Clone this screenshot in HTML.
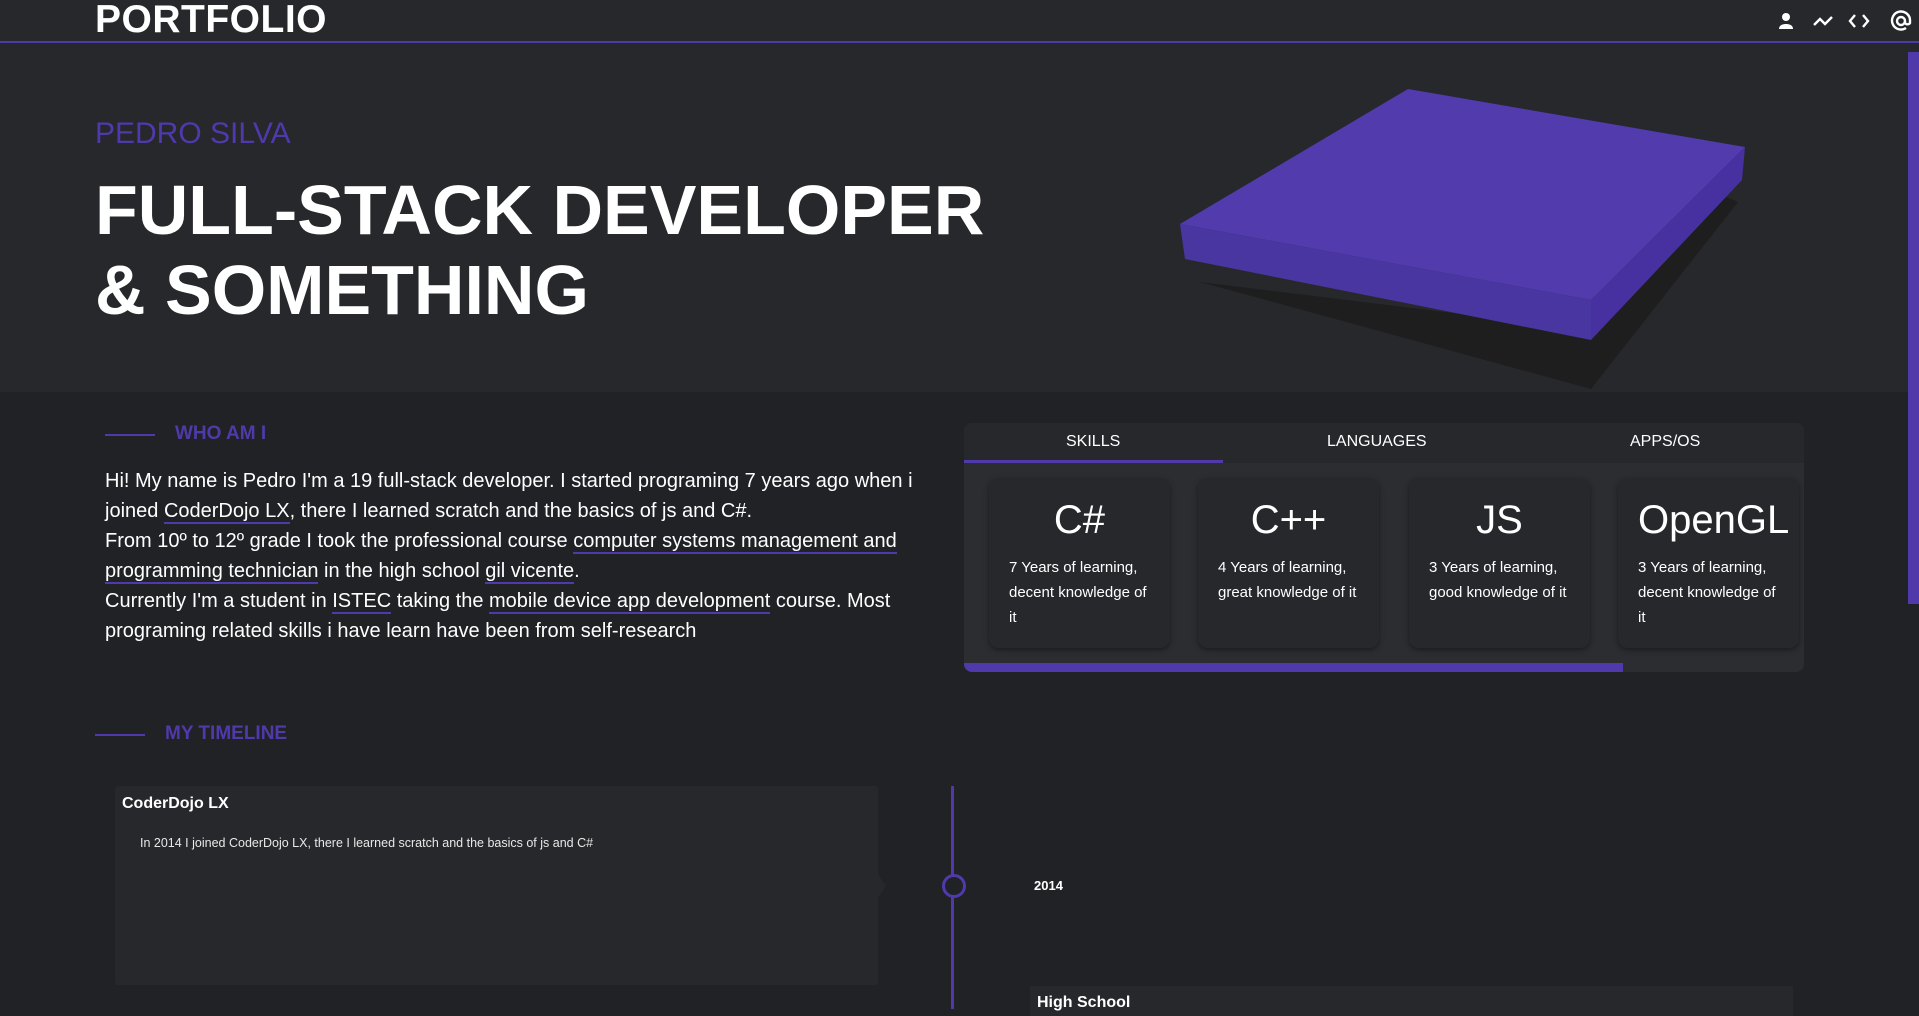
<!DOCTYPE html>
<html><head><meta charset="utf-8"><style>
*{margin:0;padding:0;box-sizing:border-box}
body{width:1919px;height:1009px;overflow:hidden;background:#212226;font-family:"Liberation Sans",sans-serif;color:#fff;position:relative}
.abs{position:absolute}
header{position:absolute;left:0;top:0;width:1919px;height:43px;background:#27282c;border-bottom:2px solid #5039ab}
.logo{left:95px;top:-2px;font-size:39px;font-weight:bold;letter-spacing:.5px}
.hero{left:0;top:43px;width:1919px;height:349px;background:#27282c}
.sub{left:95px;top:117px;font-size:30px;color:#5039ab}
.h1{left:95px;top:170px;font-size:70px;font-weight:bold;line-height:80px}
.sec{font-size:19px;font-weight:bold;color:#5039ab}
.sec:before{content:"";position:absolute;left:-70px;top:11px;width:50px;height:2px;background:#5039ab}
.para{left:105px;top:466px;width:830px;font-size:20px;line-height:30px}
.para u{text-decoration:none;border-bottom:2px solid #5039ab}
.tabs{left:964px;top:423px;width:840px;height:249px;background:#2c2d31;border-radius:8px;overflow:hidden}
.tabh{height:40px;background:#27282c;position:relative;font-size:16px}
.tabh span{position:absolute;top:10px}
.card{position:absolute;top:55px;width:181px;height:170px;background:#27282c;border-radius:10px;box-shadow:0 2px 6px rgba(0,0,0,.4);padding:0 20px}
.card h3{font-weight:normal;font-size:40px;text-align:center;margin-top:20px;white-space:nowrap}
.card p{font-size:15px;line-height:25px;margin-top:12px}
.tl{left:115px;top:786px;width:763px;height:199px;background:#27282c;border-radius:3px}
</style></head><body>
<header><div class="abs logo">PORTFOLIO</div>
<svg class="abs" style="left:1774px;top:8px" width="140" height="26" viewBox="0 0 140 26">
<g fill="#fff"><circle cx="12" cy="9" r="4"/><path d="M5 21c0-4 4-5 7-5s7 1 7 5z"/></g>
<g fill="none" stroke="#fff" stroke-width="2.4"><path d="M40 17l6-6 5 5 7-7"/><path d="M81 7l-5 6 5 6M89 7l5 6-5 6"/><circle cx="127" cy="13" r="4"/><path d="M131 13v2a3 3 0 0 0 5 0v-2a9 9 0 1 0-4 7"/></g></svg>
</header>
<div class="abs hero"></div>
<div class="abs sub">PEDRO SILVA</div>
<div class="abs h1">FULL-STACK DEVELOPER<br>&amp; SOMETHING</div>
<svg class="abs" style="left:1150px;top:70px" width="620" height="322" viewBox="0 0 620 322">
<path d="M50 212L441 319 588 132 560 120 441 260z" fill="#1e1e1f"/>
<path d="M30 154L258 19 595 77 441 230z" fill="#513bad"/>
<path d="M30 154L441 230 441 270 35 189z" fill="#4a36a0"/>
<path d="M441 230L595 77 592 110 441 270z" fill="#4731a0"/>
</svg>
<div class="abs" style="left:1908px;top:52px;width:11px;height:552px;background:#5039ab"></div>
<div class="abs sec" style="left:175px;top:423px">WHO AM I</div>
<div class="abs para">Hi! My name is Pedro I'm a 19 full-stack developer. I started programing 7 years ago when i joined <u>CoderDojo LX</u>, there I learned scratch and the basics of js and C#.<br>From 10º to 12º grade I took the professional course <u>computer systems management and programming technician</u> in the high school <u>gil vicente</u>.<br>Currently I'm a student in <u>ISTEC</u> taking the <u>mobile device app development</u> course. Most programing related skills i have learn have been from self-research</div>
<div class="abs tabs">
<div class="tabh"><span style="left:102px">SKILLS</span><span style="left:363px">LANGUAGES</span><span style="left:666px">APPS/OS</span>
<div class="abs" style="left:0;top:37px;width:259px;height:3px;background:#5039ab"></div></div>
<div class="card" style="left:25px"><h3>C#</h3><p>7 Years of learning, decent knowledge of it</p></div>
<div class="card" style="left:234px"><h3>C++</h3><p>4 Years of learning, great knowledge of it</p></div>
<div class="card" style="left:445px"><h3>JS</h3><p>3 Years of learning, good knowledge of it</p></div>
<div class="card" style="left:654px"><h3>OpenGL</h3><p>3 Years of learning, decent knowledge of it</p></div>
<div class="abs" style="left:0;top:240px;width:659px;height:9px;background:#5039ab"></div>
</div>
<div class="abs sec" style="left:165px;top:723px">MY TIMELINE</div>
<div class="abs tl"><div class="abs" style="left:7px;top:9px;font-size:16px;font-weight:bold">CoderDojo LX</div>
<div class="abs" style="left:25px;top:50px;font-size:12.5px;color:#e8e8e8">In 2014 I joined CoderDojo LX, there I learned scratch and the basics of js and C#</div>
<div class="abs" style="left:763px;top:88px;width:0;height:0;border-top:12px solid transparent;border-bottom:12px solid transparent;border-left:8px solid #27282c"></div></div>
<div class="abs" style="left:951px;top:786px;width:3px;height:223px;background:#5039ab"></div>
<div class="abs" style="left:942px;top:874px;width:24px;height:24px;border:3px solid #5039ab;border-radius:50%;background:#212226"></div>
<div class="abs" style="left:1034px;top:878px;font-size:13px;font-weight:bold">2014</div>
<div class="abs" style="left:1030px;top:986px;width:763px;height:30px;background:#27282c"><div class="abs" style="left:7px;top:8px;font-size:16px;font-weight:bold">High School</div></div>
</body></html>
